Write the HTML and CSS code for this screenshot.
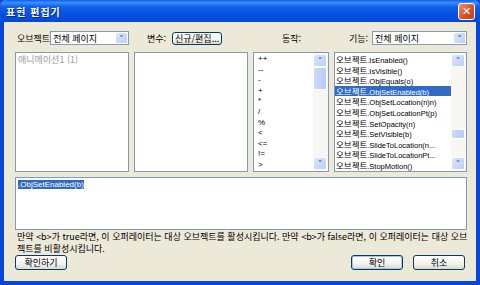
FILE: index.html
```html
<!DOCTYPE html>
<html lang="ko">
<head>
    <meta charset="UTF-8">
    <title>표현 편집기</title>
    <link rel="stylesheet" href="styles.css">
</head>
<body>
    <div class="window">
        <div class="titlebar">
            <span class="title">표현 편집기</span>
            <div class="close">&#x2715;</div>
        </div>
        <div class="content">
            <div class="grid top-row">
                <div class="cell">
                    <span class="label">오브젝트</span>
                    <div class="select obj-select"><span>전체 페이지</span><i class="drop">&#x2C5;</i></div>
                </div>
                <div class="cell var-cell">
                    <span class="label">변수:</span>
                    <button class="btn small">신규/편집...</button>
                </div>
                <div class="cell op-cell"><span class="label">동작:</span></div>
                <div class="cell fn-cell">
                    <span class="label">기능:</span>
                    <div class="select fn-select"><span>전체 페이지</span><i class="drop">&#x2C5;</i></div>
                </div>
            </div>

            <div class="grid lists">
                <div class="list">
                    <div class="items">
                        <div class="item muted">애니메이션1 (1)</div>
                    </div>
                </div>
                <div class="list">
                    <div class="items"></div>
                </div>
                <div class="list">
                    <div class="items ops">
                        <div class="item">++</div>
                        <div class="item">--</div>
                        <div class="item">-</div>
                        <div class="item">+</div>
                        <div class="item">*</div>
                        <div class="item">/</div>
                        <div class="item">%</div>
                        <div class="item">&lt;</div>
                        <div class="item">&lt;=</div>
                        <div class="item">!=</div>
                        <div class="item">&gt;</div>
                    </div>
                    <div class="scrollbar">
                        <div class="sb-btn">&#x2C4;</div>
                        <div class="sb-track"><div class="sb-thumb thumb-top"></div></div>
                        <div class="sb-btn">&#x2C5;</div>
                    </div>
                </div>
                <div class="list">
                    <div class="items fns">
                        <div class="item"><b>오브젝트</b>.IsEnabled()</div>
                        <div class="item"><b>오브젝트</b>.IsVisible()</div>
                        <div class="item"><b>오브젝트</b>.ObjEquals(o)</div>
                        <div class="item selected"><b>오브젝트</b>.ObjSetEnabled(b)</div>
                        <div class="item"><b>오브젝트</b>.ObjSetLocation(n)n)</div>
                        <div class="item"><b>오브젝트</b>.ObjSetLocationPt(p)</div>
                        <div class="item"><b>오브젝트</b>.SetOpacity(n)</div>
                        <div class="item"><b>오브젝트</b>.SetVisible(b)</div>
                        <div class="item"><b>오브젝트</b>.SlideToLocation(n...</div>
                        <div class="item"><b>오브젝트</b>.SlideToLocationPt...</div>
                        <div class="item"><b>오브젝트</b>.StopMotion()</div>
                    </div>
                    <div class="scrollbar">
                        <div class="sb-btn">&#x2C4;</div>
                        <div class="sb-track"><div class="sb-thumb thumb-low"></div></div>
                        <div class="sb-btn">&#x2C5;</div>
                    </div>
                </div>
            </div>

            <div class="editor"><span class="sel">.ObjSetEnabled(b)</span></div>

            <p class="desc">만약 &lt;b&gt;가 true라면, 이 오퍼레이터는 대상 오브젝트를 활성시킵니다. 만약 &lt;b&gt;가 false라면, 이 오퍼레이터는 대상 오브젝트를 비활성시킵니다.</p>

            <div class="footer">
                <button class="btn">확인하기</button>
                <div class="right">
                    <button class="btn default">확인</button>
                    <button class="btn">취소</button>
                </div>
            </div>
        </div>
    </div>
</body>
</html>
```

FILE: styles.css
```css
body {
    margin: 0;
    font-family: "Noto Sans CJK KR", "DejaVu Sans", sans-serif;
    font-size: 9px;
    color: #000;
    background: #fff;
}
.window {
    width: 480px;
    height: 285px;
    box-sizing: border-box;
    background: #ece9d8;
    border: 4px solid #0846d8;
    border-top: none;
    display: flex;
    flex-direction: column;
}
.titlebar {
    height: 22px;
    margin: 0 -4px;
    padding: 0 5px 0 6px;
    display: flex;
    align-items: center;
    justify-content: space-between;
    background: linear-gradient(#0a5ff0 0%, #3d8ef8 12%, #1161e8 30%, #0552e3 60%, #0648d8 100%);
    border-radius: 6px 6px 0 0;
}
.title {
    color: #fff;
    font-weight: bold;
    font-size: 10px;
    letter-spacing: 1px;
    text-shadow: 1px 1px 0 #0a2a80;
}
.close {
    width: 15px;
    height: 15px;
    border: 1px solid #fff;
    border-radius: 3px;
    background: linear-gradient(135deg, #f09070, #d8542a 55%, #c23d18);
    color: #fff;
    font-size: 11px;
    font-weight: bold;
    line-height: 15px;
    text-align: center;
    font-family: "DejaVu Sans", sans-serif;
}
.content {
    flex: 1;
    padding: 9px 9px 0 11px;
}
.grid {
    display: grid;
    grid-template-columns: 114px 114px 76px 133px;
    column-gap: 5px;
}
.cell {
    display: flex;
    align-items: center;
    height: 14px;
}
.label {
    white-space: nowrap;
}
.top-row .cell:first-child .label {
    padding-left: 2px;
}
.var-cell {
    padding-left: 13px;
}
.var-cell .label {
    margin-right: 6px;
}
.op-cell {
    padding-left: 29px;
}
.fn-cell {
    padding-left: 15px;
}
.fn-cell .label {
    margin-right: 4px;
}
.select {
    display: flex;
    align-items: center;
    height: 14px;
    box-sizing: border-box;
    background: #fff;
    border: 1px solid #7f9db9;
    padding-left: 2px;
}
.select span {
    flex: 1;
    white-space: nowrap;
}
.obj-select {
    width: 80px;
}
.fn-select {
    flex: 1;
}
.drop, .sb-btn {
    font-style: normal;
    font-family: "DejaVu Sans", sans-serif;
    font-weight: bold;
    color: #4d6185;
    text-align: center;
    background: linear-gradient(135deg, #dce6fd, #bccdf7);
    border: 1px solid #fff;
    border-radius: 2px;
    box-sizing: border-box;
}
.drop {
    width: 13px;
    height: 12px;
    font-size: 9px;
    line-height: 12px;
}
.btn {
    font-family: inherit;
    font-size: 9px;
    padding: 0;
    background: linear-gradient(#ffffff, #f3f2ec 60%, #dcd9cb);
    border: 1px solid #003c74;
    border-radius: 3px;
    color: #000;
    height: 15px;
    width: 52px;
}
.btn.small {
    width: 50px;
    height: 13px;
    line-height: 11px;
}
.btn.default {
    box-shadow: inset 0 0 0 1px #a8c3ee;
}
.lists {
    margin-top: 7px;
    height: 120px;
}
.list {
    display: flex;
    background: #fff;
    border: 1px solid #7f9db9;
    overflow: hidden;
}
.items {
    flex: 1;
    padding: 1px 0 0 1px;
}
.item {
    height: 10.6px;
    line-height: 10.6px;
    white-space: nowrap;
    padding-left: 1px;
}
.item.muted {
    color: #9a9a9a;
    padding-top: 1px;
}
.ops .item {
    padding-left: 3px;
    font-family: "Liberation Sans", sans-serif;
    font-size: 8px;
}
.fns {
    padding-left: 0;
    padding-top: 1px;
    font-family: "Liberation Sans", sans-serif;
    font-size: 7.5px;
}
.fns b {
    font-weight: normal;
    font-family: "Noto Sans CJK KR", sans-serif;
    font-size: 8.5px;
}
.item.selected {
    background: #316ac5;
    color: #fff;
}
.scrollbar {
    width: 14px;
    display: flex;
    flex-direction: column;
    background: #f7f6f2;
    padding: 1px 1px 1px 0;
}
.sb-btn {
    height: 13px;
    font-size: 9px;
    line-height: 12px;
}
.sb-track {
    flex: 1;
}
.sb-thumb {
    height: 23px;
    background: linear-gradient(90deg, #ccdafa, #b9cbf5);
    border: 1px solid #fff;
    border-radius: 2px;
    box-sizing: border-box;
}
.thumb-low {
    margin-top: 62px;
    height: 10px;
}
.editor {
    margin-top: 5px;
    height: 53px;
    box-sizing: border-box;
    background: #fff;
    border: 1px solid #7f9db9;
    padding: 2px;
    font-family: "Liberation Sans", sans-serif;
    font-size: 8px;
}
.sel {
    background: #316ac5;
    color: #fff;
}
.desc {
    margin: 1px 0 0 2px;
    line-height: 12px;
    width: 455px;
    word-break: break-all;
}
.footer {
    display: flex;
    justify-content: space-between;
    padding-right: 2px;
}
.footer .right {
    display: flex;
    gap: 10px;
}
```
